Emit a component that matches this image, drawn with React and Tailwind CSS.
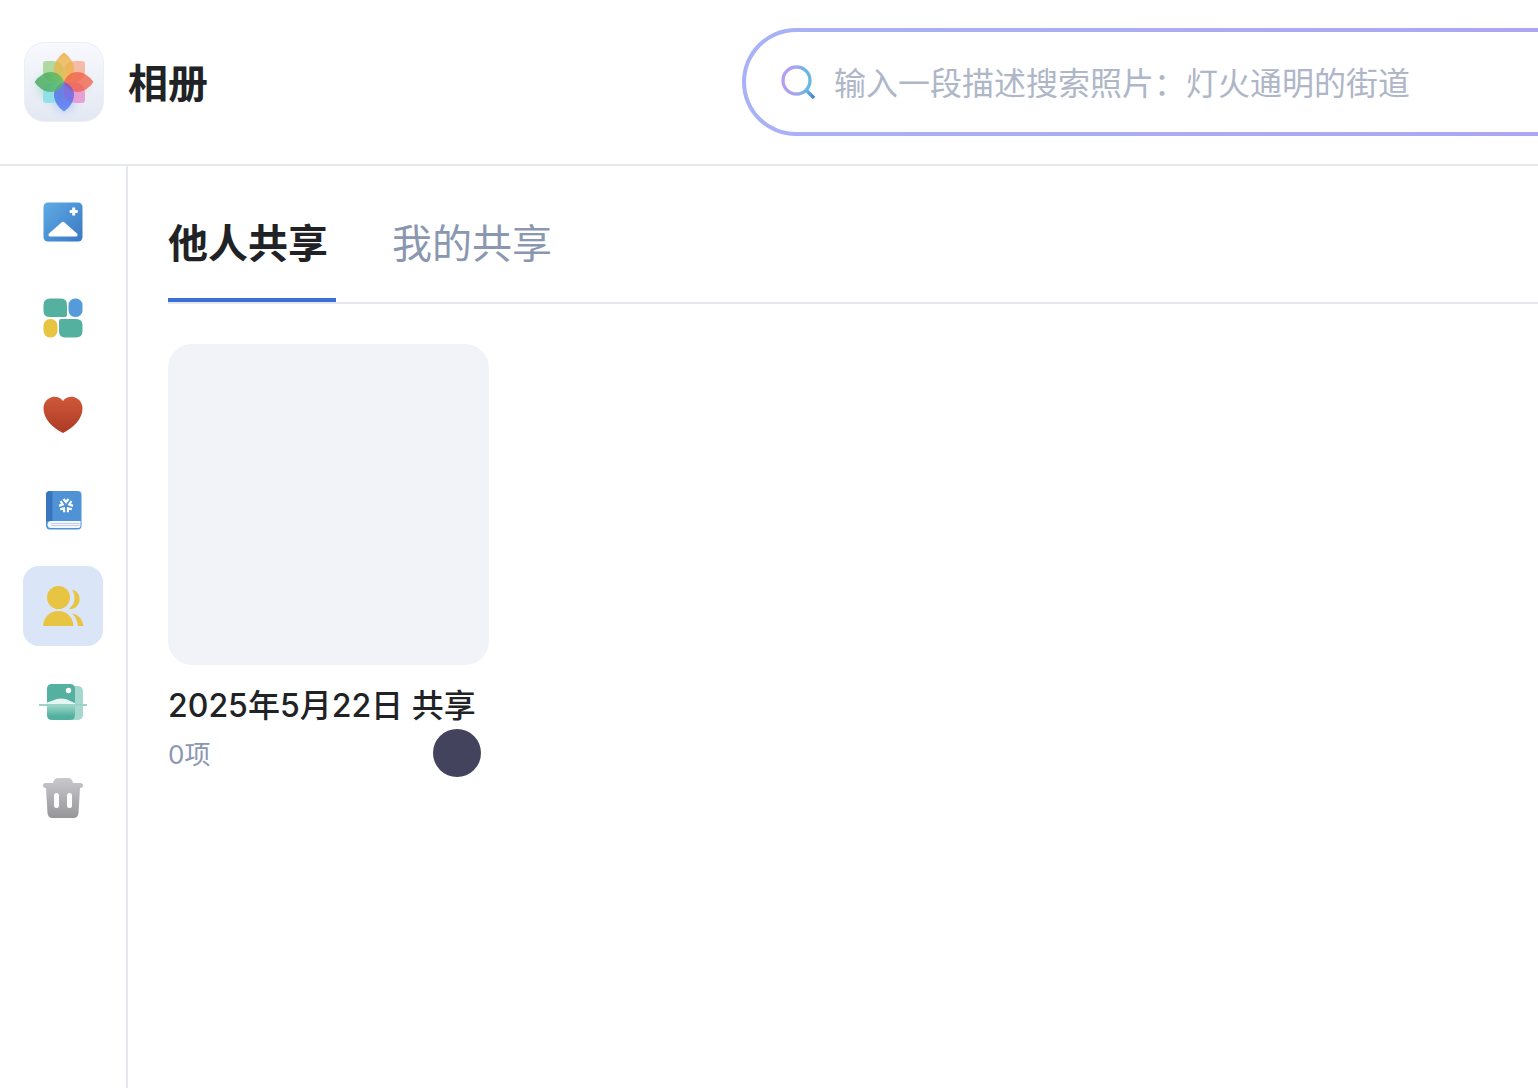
import React from "react";

function AppLogo() {
  return (
    <svg viewBox="0 0 80 80" className="size-20" aria-hidden="true">
      <defs>
        <linearGradient id="tile" x1="0" y1="0" x2="0" y2="1">
          <stop offset="0" stopColor="#f8f9fe" />
          <stop offset="1" stopColor="#e2e8f2" />
        </linearGradient>
        <linearGradient id="petalTop" x1="0" y1="0" x2="0" y2="1">
          <stop offset="0" stopColor="#f0a63a" />
          <stop offset="1" stopColor="#e8c050" />
        </linearGradient>
        <linearGradient id="petalRight" x1="1" y1="0" x2="0" y2="0">
          <stop offset="0" stopColor="#ee5f48" />
          <stop offset="1" stopColor="#f2603f" />
        </linearGradient>
        <linearGradient id="petalBottom" x1="0" y1="1" x2="0" y2="0">
          <stop offset="0" stopColor="#3f76f6" />
          <stop offset="1" stopColor="#6a58d8" />
        </linearGradient>
        <linearGradient id="petalLeft" x1="0" y1="0" x2="1" y2="0">
          <stop offset="0" stopColor="#389f52" />
          <stop offset="1" stopColor="#5cb860" />
        </linearGradient>
        <filter id="glow" x="-50%" y="-50%" width="200%" height="200%">
          <feGaussianBlur stdDeviation="4" />
        </filter>
      </defs>
      <rect x="0.5" y="0.5" width="79" height="79" rx="20" fill="url(#tile)" stroke="#eceff6" />
      <g filter="url(#glow)" opacity="0.3">
        <circle cx="24" cy="44" r="11" fill="#58c98c" />
        <circle cx="40" cy="58" r="11" fill="#5a86f8" />
        <circle cx="55" cy="42" r="9" fill="#f9a9a0" />
      </g>
      <path d="M40 40H31Q19 40 19 28V22Q19 19 22 19H28Q40 19 40 31Z" fill="#a4d590" opacity="0.85" />
      <path d="M40 40H49Q61 40 61 28V22Q61 19 58 19H52Q40 19 40 31Z" fill="#f4b097" opacity="0.85" />
      <path d="M40 40H31Q19 40 19 52V58Q19 61 22 61H28Q40 61 40 49Z" fill="#8adfe8" opacity="0.9" />
      <path d="M40 40H49Q61 40 61 52V58Q61 61 58 61H52Q40 61 40 49Z" fill="#e793cf" opacity="0.85" />
      <path d="M40 10.500C45 14 50 20 50 27C50 33 46 38 40 40C34 38 30 33 30 27C30 20 35 14 40 10.500Z" fill="url(#petalTop)" opacity="0.75" />
      <path d="M69.500 40C66 45 60 50 53 50C47 50 42 46 40 40C42 34 47 30 53 30C60 30 66 35 69.500 40Z" fill="url(#petalRight)" opacity="0.75" />
      <path d="M40 69.500C35 66 30 60 30 53C30 47 34 42 40 40C46 42 50 47 50 53C50 60 45 66 40 69.500Z" fill="url(#petalBottom)" opacity="0.75" />
      <path d="M10.500 40C14 35 20 30 27 30C33 30 38 34 40 40C38 46 33 50 27 50C20 50 14 45 10.500 40Z" fill="url(#petalLeft)" opacity="0.75" />
    </svg>
  );
}

function SearchIcon() {
  return (
    <svg viewBox="0 0 40 40" className="size-10 shrink-0" fill="none" aria-hidden="true">
      <defs>
        <linearGradient id="lens" x1="5" y1="22" x2="34" y2="22" gradientUnits="userSpaceOnUse">
          <stop offset="0" stopColor="#b59df0" />
          <stop offset="0.5" stopColor="#a3a7ee" />
          <stop offset="0.75" stopColor="#66b6e6" />
          <stop offset="1" stopColor="#6ab7e2" />
        </linearGradient>
        <linearGradient id="handle" x1="28" y1="28" x2="37" y2="37" gradientUnits="userSpaceOnUse">
          <stop offset="0" stopColor="#66b8e4" />
          <stop offset="1" stopColor="#4478d4" />
        </linearGradient>
      </defs>
      <circle cx="18.500" cy="18.500" r="13.500" stroke="url(#lens)" strokeWidth="3.300" />
      <path d="M28 28L36 36" stroke="url(#handle)" strokeWidth="3.500" />
    </svg>
  );
}

function PhotoIcon() {
  return (
    <svg viewBox="0 0 48 48" className="size-12" aria-hidden="true">
      <defs>
        <linearGradient id="photo" x1="0" y1="0" x2="1" y2="1">
          <stop offset="0" stopColor="#5fabe4" />
          <stop offset="1" stopColor="#3a78c4" />
        </linearGradient>
      </defs>
      <rect x="4.500" y="4.500" width="39" height="39" rx="4.500" fill="url(#photo)" />
      <path d="M33.200 9.500h3v2.500h2.500v3h-2.500v2.500h-3v-2.500h-2.500v-3h2.500z" fill="#fff" />
      <path d="M22.500 24.500Q24 23.200 25.500 24.500L38 35.500Q39.500 38.500 37 38.500H11Q8.500 38.500 10 35.500Z" fill="#fff" />
    </svg>
  );
}

function AlbumsIcon() {
  return (
    <svg viewBox="0 0 48 48" className="size-12" aria-hidden="true">
      <path d="M11 4.500H22Q28 4.500 28 11V21Q28 23 26 23H11Q4.500 23 4.500 17V11Q4.500 4.500 11 4.500Z" fill="#54b1a0" />
      <rect x="29.500" y="4.500" width="14" height="18.500" rx="6.500" fill="#559bda" />
      <rect x="4.500" y="25" width="14" height="18.500" rx="6.500" fill="#e8c443" />
      <path d="M22 25H37Q43.500 25 43.500 31V37Q43.500 43.500 37 43.500H26Q20 43.500 20 37V27Q20 25 22 25Z" fill="#54b1a0" />
    </svg>
  );
}

function HeartIcon() {
  return (
    <svg viewBox="0 0 48 48" className="size-12" aria-hidden="true">
      <defs>
        <linearGradient id="heart" x1="0" y1="0" x2="0" y2="1">
          <stop offset="0" stopColor="#ce5838" />
          <stop offset="1" stopColor="#ad3a25" />
        </linearGradient>
      </defs>
      <path d="M24 11C21 7 16.500 6 12.500 7.200C7.500 8.800 4.500 13 4.500 18.500C4.500 28.500 13 37.500 24 43C35 37.500 43.500 28.500 43.500 18.500C43.500 13 40.500 8.800 35.500 7.200C31.500 6 27 7 24 11Z" fill="url(#heart)" />
    </svg>
  );
}

function BookIcon() {
  return (
    <svg viewBox="0 0 48 48" className="size-12" aria-hidden="true">
      <path d="M11 5H38.500Q42.500 5 42.500 9V39.500Q42.500 43.500 38.500 43.500H11Q7 43.500 7 39V9Q7 5 11 5Z" fill="#4f93d6" />
      <path d="M11 5H13.500V35H7V9Q7 5 11 5Z" fill="#3a76bf" />
      <path d="M12 35H41.500V39.500Q41.500 42 39 42H12Q8.500 42 8.500 38.500Q8.500 35 12 35Z" fill="#f3f8ff" />
      <path d="M12 37.500H40.500M12 39.500H40.500" stroke="#c3cdf0" />
      <g stroke="#fff" strokeWidth="2.200" fill="none">
        {[36, 108, 180, 252, 324].map((angle) => (
          <path key={angle} d="M24.500 26L27 23L29.500 26" transform={`rotate(${angle} 27 19.500)`} />
        ))}
      </g>
    </svg>
  );
}

function PeopleIcon() {
  return (
    <svg viewBox="0 0 48 48" className="size-12" fill="#e8c443" aria-hidden="true">
      <circle cx="19.500" cy="15.500" r="11.500" />
      <path d="M4 44C4.500 35 11 29 19.250 29C27.500 29 34 35 34.500 44Z" />
      <path d="M33 8C38 8.500 41 12.500 40.500 18C40 24 35.500 27.500 30 27C34 23.500 35.500 20 35.500 16C35.500 12.500 34.500 10 33 8Z" />
      <path d="M33 31.500C39 32.500 43 36 44.500 44H39C38.500 39 36.500 34.500 33 31.500Z" />
    </svg>
  );
}

function ScanIcon() {
  return (
    <svg viewBox="0 0 48 48" className="size-12" aria-hidden="true">
      <defs>
        <linearGradient id="scan" x1="0" y1="0" x2="0" y2="1">
          <stop offset="0" stopColor="#9dd7ca" />
          <stop offset="0.750" stopColor="#52b09f" />
        </linearGradient>
      </defs>
      <rect x="28" y="8" width="16" height="34" rx="5" fill="#a5d8cf" />
      <path d="M13 6H31Q36 6 36 11V26H8V11Q8 6 13 6Z" fill="#54b1a0" />
      <path d="M8 24.500C12 23.500 17 20.500 22 20.500C28 20.500 32 23.500 36 25V26H8Z" fill="#e6f5f1" />
      <circle cx="29.500" cy="12.500" r="2.700" fill="#fff" />
      <path d="M8 27H36V37Q36 42 31 42H13Q8 42 8 37Z" fill="url(#scan)" />
      <path d="M0 27H48" stroke="#9bd3c7" strokeWidth="2" />
    </svg>
  );
}

function TrashIcon() {
  return (
    <svg viewBox="0 0 48 48" className="size-12" aria-hidden="true">
      <defs>
        <linearGradient id="trash" x1="0" y1="0" x2="0" y2="1">
          <stop offset="0" stopColor="#c9c9cd" />
          <stop offset="1" stopColor="#95959a" />
        </linearGradient>
      </defs>
      <path d="M14 9Q15 4 19 4H29Q33 4 34 9H41.500Q44 9 44 11.500Q44 13.500 41 14L39.500 39Q39 44 34.500 44H13.500Q9 44 8.500 39L7 14Q4 13.500 4 11.500Q4 9 6.500 9Z" fill="url(#trash)" />
      <rect x="15" y="19" width="5" height="15" rx="2.500" fill="#fff" />
      <rect x="28" y="19" width="5" height="15" rx="2.500" fill="#fff" />
    </svg>
  );
}

const NAV = [
  { label: "照片", Icon: PhotoIcon },
  { label: "相册", Icon: AlbumsIcon },
  { label: "收藏", Icon: HeartIcon },
  { label: "影集", Icon: BookIcon },
  { label: "共享", Icon: PeopleIcon, active: true },
  { label: "扫描", Icon: ScanIcon },
  { label: "回收站", Icon: TrashIcon },
];

export default function App() {
  return (
    <div className="flex min-h-screen flex-col overflow-hidden bg-white font-['Inter','Noto_Sans_CJK_SC',sans-serif] text-[#202226]">
      <header className="flex items-center border-b-2 border-[#e5e8ef] py-7">
        <div className="flex w-[742px] shrink-0 items-center gap-6 pl-6">
          <AppLogo />
          <h1 className="pt-1 text-[40px] leading-[56px] font-bold">相册</h1>
        </div>
        <div className="flex-1 rounded-l-full bg-linear-to-r from-[#a8b2f6] to-[#ada6f2] py-1 pl-1">
          <label className="flex h-25 items-center gap-4 rounded-l-full bg-white pl-8">
            <SearchIcon />
            <input
              type="search"
              aria-label="搜索照片"
              placeholder="输入一段描述搜索照片：灯火通明的街道"
              className="min-w-0 flex-1 bg-transparent pt-1 text-[32px] leading-[48px] outline-none placeholder:text-[#aeb6c8]"
            />
          </label>
        </div>
      </header>

      <div className="flex flex-1">
        <nav className="flex w-32 shrink-0 flex-col items-center gap-4 border-r-2 border-[#e5e8ef] pt-4">
          {NAV.map(({ label, Icon, active }) => (
            <button
              key={label}
              type="button"
              aria-label={label}
              className={`flex size-20 items-center justify-center rounded-2xl ${active ? "bg-[#dae5f7]" : ""}`}
            >
              <Icon />
            </button>
          ))}
        </nav>

        <main className="min-w-0 flex-1 pt-5 pl-10">
          <div role="tablist" className="flex gap-14 border-b-2 border-[#e5e8ef]">
            <button role="tab" aria-selected="true" type="button" className="border-b-4 border-[#3c70d4] pt-[30px] pr-2 pb-[26px] text-[40px] leading-[56px] font-bold">
              他人共享
            </button>
            <button role="tab" aria-selected="false" type="button" className="border-b-4 border-transparent pt-[30px] pb-[26px] text-[40px] leading-[56px] text-[#8a97b1]">
              我的共享
            </button>
          </div>

          <article className="mt-10 w-[321px]">
            <div className="aspect-square rounded-3xl bg-[#f2f3f8]" />
            <h2 className="pt-[18px] text-[32px] leading-[46px] font-[450] whitespace-nowrap">2025年5月22日 共享</h2>
            <div className="flex items-center justify-between pr-2">
              <span className="pt-1 text-[26px] leading-[40px] text-[#8a97b1]">0项</span>
              <span className="size-12 rounded-full bg-[#44435e]" />
            </div>
          </article>
        </main>
      </div>
    </div>
  );
}
